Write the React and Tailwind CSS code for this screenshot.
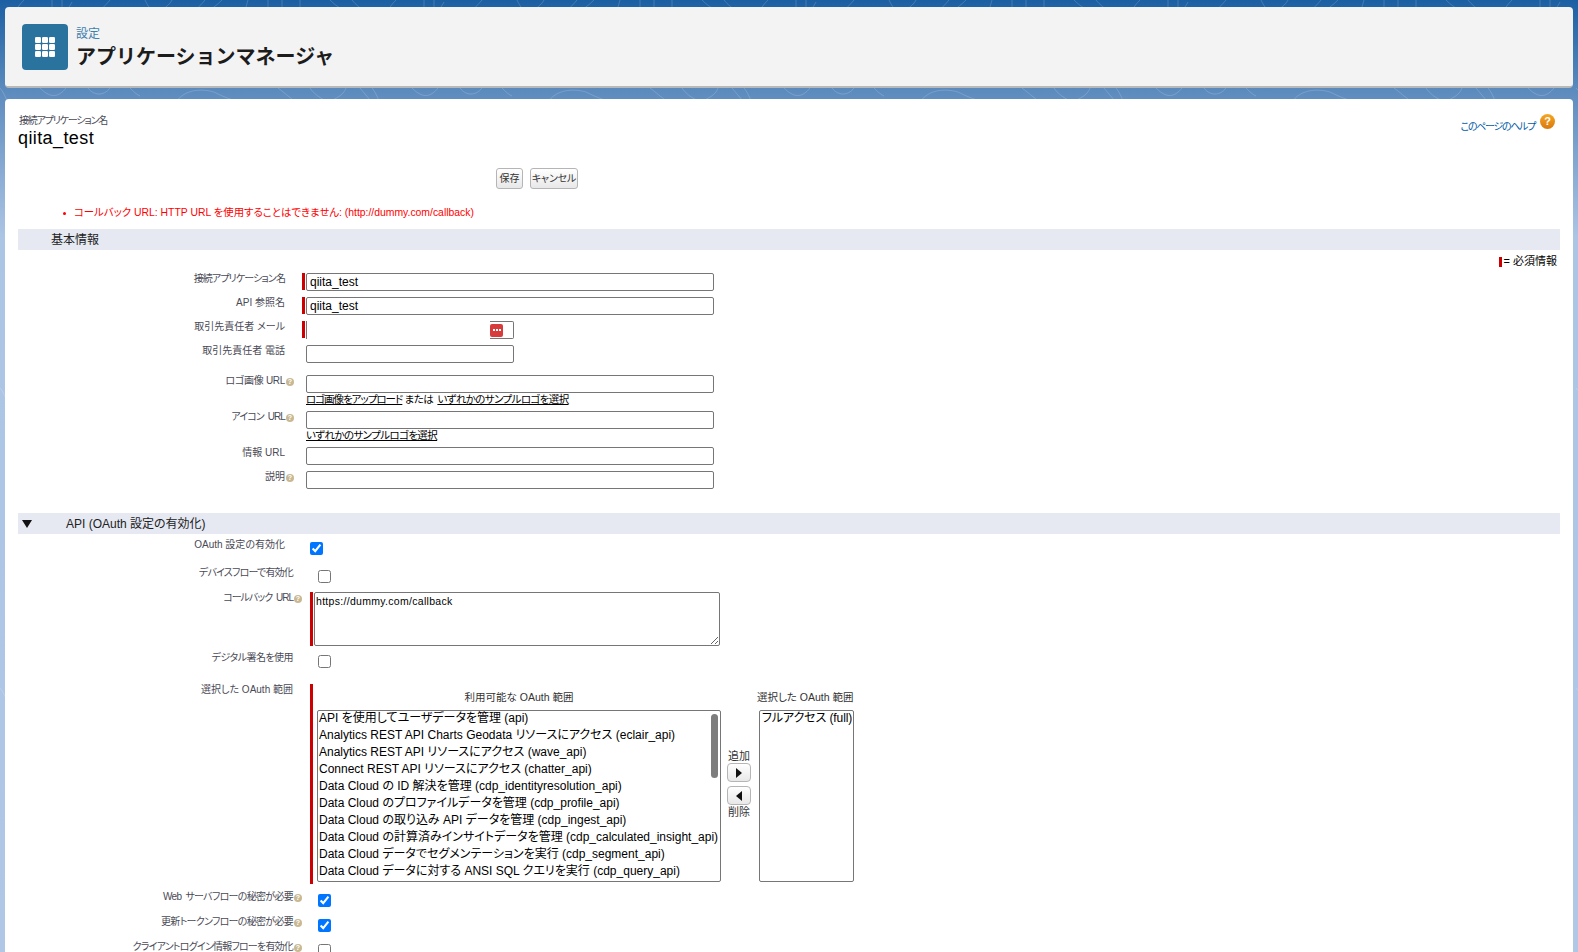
import React from "react";

const scopes = [
  "API を使用してユーザデータを管理 (api)",
  "Analytics REST API Charts Geodata リソースにアクセス (eclair_api)",
  "Analytics REST API リソースにアクセス (wave_api)",
  "Connect REST API リソースにアクセス (chatter_api)",
  "Data Cloud の ID 解決を管理 (cdp_identityresolution_api)",
  "Data Cloud のプロファイルデータを管理 (cdp_profile_api)",
  "Data Cloud の取り込み API データを管理 (cdp_ingest_api)",
  "Data Cloud の計算済みインサイトデータを管理 (cdp_calculated_insight_api)",
  "Data Cloud データでセグメンテーションを実行 (cdp_segment_api)",
  "Data Cloud データに対する ANSI SQL クエリを実行 (cdp_query_api)",
];

const inputClass =
  "block h-[18px] border border-[#767676] rounded-[2px] bg-white px-[3px] text-[12px] leading-none text-black outline-none";

const labelClass = "shrink-0 text-right text-[10px] leading-[11px] text-[#4a4a56] whitespace-nowrap";

const Help = () => (
  <span className="inline-flex w-[8px] h-[8px] ml-[1px] rounded-full bg-[#c9b892] text-white text-[7px] leading-[8px] justify-center font-bold tracking-normal align-[0px]">
    ?
  </span>
);

const Bg = () => (
  <svg className="absolute inset-0 w-full h-full" aria-hidden="true">
    <defs>
      <pattern id="topo" width="372" height="300" patternUnits="userSpaceOnUse">
        <g fill="none" stroke="#ffffff" strokeOpacity="0.16" strokeWidth="1">
          <path d="M24 0 C18 6 16 10 14 16" />
          <path d="M110 0 C106 5 100 10 96 16" />
          <path d="M52 0 V12 M62 0 V10 M72 2 C70 6 68 8 66 12" />
          <path d="M145 0 C148 6 150 10 156 12 C164 10 170 4 172 0" />
          <path d="M205 0 C200 6 196 10 190 14 M222 0 C216 6 210 10 204 14" />
          <path d="M248 0 L244 14 M268 0 V12 M282 0 V12 M300 0 V12" />
          <path d="M330 0 C336 6 342 10 350 12 M352 0 C356 5 360 8 366 12" />
          <path d="M40 88 C50 98 58 98 66 88 M88 88 C94 96 104 96 110 88" />
          <path d="M130 88 C134 92 136 94 140 96 M176 102 C184 90 200 88 214 92 C226 98 232 100 240 102" />
          <path d="M278 88 C286 94 290 98 296 102 M310 88 C314 94 320 98 328 102 C338 98 344 94 346 88" />
          <path d="M0 88 C5 94 6 100 8 102 M360 88 L370 100" />
        </g>
      </pattern>
    </defs>
    <rect width="100%" height="100%" fill="url(#topo)" />
  </svg>
);

const Field = ({ label, help, req, tight = "", children, className = "" }) => (
  <div className={`flex items-start ${className}`}>
    <div className={`w-[276px] ${labelClass} ${tight}`}>
      {label}
      {help ? <Help /> : <span className="inline-block w-[9px]" />}
    </div>
    <div className={`ml-[8px] w-[3px] h-[17px] shrink-0 ${req ? "bg-[#c00]" : ""}`} />
    <div className="ml-[1px]">{children}</div>
  </div>
);

const Field2 = ({ label, help, tight = "", className = "", children }) => (
  <div className={`flex items-start ${className}`}>
    <div className={`w-[284px] ${labelClass} ${tight}`}>
      {label}
      {help ? <Help /> : <span className="inline-block w-[9px]" />}
    </div>
    {children}
  </div>
);

const Check = ({ checked, className = "" }) => (
  <input
    type="checkbox"
    defaultChecked={checked}
    className={`w-[13px] h-[13px] m-0 block shrink-0 ${className}`}
  />
);

const MoveButton = ({ children }) => (
  <button className="w-[24px] h-[19px] flex items-center justify-center rounded-[4px] border border-[#b5b5b5] bg-gradient-to-b from-white to-[#e8e8e8]">
    {children}
  </button>
);

const App = () => {
  return (
    <div className="relative h-[952px] w-full overflow-hidden bg-[linear-gradient(to_bottom,#1b5fa3_0%,#5f8dbf_10%,#adc5e5_25%,#b0c7e6_100%)] text-black [font-family:'Liberation_Sans','Noto_Sans_CJK_JP',sans-serif] [font-feature-settings:'palt']">
      <Bg />
      <div className="relative px-[5px] pt-[7px]">
        {/* page title */}
        <div className="h-[81px] rounded-[4px] bg-[#f3f3f3] border-b-2 border-[#b8b8b8] flex items-start pl-[17px] pt-[17px]">
          <div className="w-[46px] h-[46px] rounded-[4px] bg-[#2a739f] flex items-center justify-center">
            <svg width="20" height="20" viewBox="0 0 20 20" fill="#fff">
              {[0, 7, 14].map((y) =>
                [0, 7, 14].map((x) => (
                  <rect key={`${x}-${y}`} x={x} y={y} width="6" height="6" rx="1.2" />
                ))
              )}
            </svg>
          </div>
          <div className="ml-[8px] pt-[1px]">
            <div className="text-[12px] leading-[18px] text-[#3f7fae]">設定</div>
            <h1 className="mt-[1px] text-[20px] leading-[26px] font-bold text-[#1c1c1c] [font-feature-settings:normal]">
              アプリケーションマネージャ
            </h1>
          </div>
        </div>

        {/* detail card */}
        <div className="mt-[11px] h-[900px] rounded-t-[4px] bg-white px-[13px] pt-[15px]">
          <div className="flex justify-between items-start">
            <div>
              <div className="pl-[1px] text-[10px] leading-[14px] text-[#4a4a56] tracking-[-1.2px]">接続アプリケーション名</div>
              <div className="text-[18px] leading-[20px] text-black tracking-[0.4px]">qiita_test</div>
            </div>
            <div className="flex items-start pr-[5px]">
              <a className="mt-[7px] text-[10px] leading-[12px] text-[#015ba7] tracking-[-1.3px]">このページのヘルプ</a>
              <span className="ml-[5px] w-[15px] h-[15px] rounded-full flex items-center justify-center text-white text-[11px] leading-none font-bold bg-gradient-to-b from-[#f5a623] to-[#d9780f]">
                ?
              </span>
            </div>
          </div>

          <div className="mt-[20px] ml-[478px] flex gap-[7px]">
            <button className="h-[21px] w-[27px] rounded-[3px] border border-[#b5b5b5] bg-gradient-to-b from-white to-[#e8e8e8] text-[10px] text-[#333]">
              保存
            </button>
            <button className="h-[21px] w-[48px] rounded-[3px] border border-[#b5b5b5] bg-gradient-to-b from-white to-[#e8e8e8] text-[10px] text-[#333] tracking-[-0.2px]">
              キャンセル
            </button>
          </div>

          <div className="mt-[17px] ml-[45px] flex items-center text-[10.4px] leading-[14px] text-[#f00]">
            <span className="w-[3px] h-[3px] rounded-full bg-[#f00] mr-[8px]" />
            コールバック URL: HTTP URL を使用することはできません: (http://dummy.com/callback)
          </div>

          <div className="mt-[9px] h-[21px] bg-[#e6e9f2] pl-[33px] text-[12px] leading-[22px] text-[#222]">
            基本情報
          </div>

          <div className="h-[23px] flex justify-end items-center pr-[3px] text-[11px] text-black">
            <span className="w-[3px] h-[10px] bg-[#c00] mr-[2px]" />= 必須情報
          </div>

          {/* basic info */}
          <Field label="接続アプリケーション名" req tight="tracking-[-0.9px]">
            <input readOnly value="qiita_test" className={`${inputClass} w-[408px]`} />
          </Field>
          <Field label="API 参照名" req className="mt-[6px]">
            <input readOnly value="qiita_test" className={`${inputClass} w-[408px]`} />
          </Field>
          <Field label="取引先責任者 メール" req className="mt-[6px]">
            <div className="flex h-[18px] w-[208px] border-l border-[#767676]">
              <div className="w-[183px]" />
              <div className="flex-1 flex items-center border-y border-r border-[#767676] rounded-r-[2px]">
                <span className="w-[13px] h-[13px] rounded-[2px] bg-[#d83b3b] flex items-center justify-center gap-[1px]">
                  <i className="w-[2px] h-[2px] bg-white" />
                  <i className="w-[2px] h-[2px] bg-white" />
                  <i className="w-[2px] h-[2px] bg-white" />
                </span>
              </div>
            </div>
          </Field>
          <Field label="取引先責任者 電話" className="mt-[6px]">
            <input readOnly className={`${inputClass} w-[208px]`} />
          </Field>
          <Field label="ロゴ画像 URL" help tight="tracking-[-0.3px]" className="mt-[12px]">
            <input readOnly className={`${inputClass} w-[408px]`} />
            <div className="h-[18px] text-[10.5px] leading-[12px] tracking-[-0.6px]">
              <span className="underline tracking-[-1px]">ロゴ画像をアップロード</span> または{" "}
              <span className="underline ml-[2px]">いずれかのサンプルロゴを選択</span>
            </div>
          </Field>
          <Field label="アイコン URL" help tight="tracking-[-0.9px] [word-spacing:2px]">
            <input readOnly className={`${inputClass} w-[408px]`} />
            <div className="h-[18px] text-[10.5px] leading-[12px] tracking-[-0.6px]">
              <span className="underline">いずれかのサンプルロゴを選択</span>
            </div>
          </Field>
          <Field label="情報 URL">
            <input readOnly className={`${inputClass} w-[408px]`} />
          </Field>
          <Field label="説明" help className="mt-[6px]">
            <input readOnly className={`${inputClass} w-[408px]`} />
          </Field>

          {/* oauth */}
          <div className="mt-[24px] h-[21px] bg-[#e6e9f2] flex items-center text-[12px] text-[#222]">
            <svg className="ml-[4px]" width="10" height="8" viewBox="0 0 10 8" fill="#111">
              <path d="M0 0 H10 L5 8 Z" />
            </svg>
            <span className="ml-[34px]">API (OAuth 設定の有効化)</span>
          </div>

          <div className="flex items-start mt-[5px]">
            <div className={`w-[276px] ${labelClass}`}>
              OAuth 設定の有効化<span className="inline-block w-[9px]" />
            </div>
            <Check checked className="ml-[16px] mt-[3px]" />
          </div>
          <Field2 label="デバイスフローで有効化" tight="tracking-[-0.8px]" className="mt-[12px]">
            <Check className="ml-[16px] mt-[3px]" />
          </Field2>
          <Field2 label="コールバック URL" help tight="tracking-[-1px] [word-spacing:2px]" className="mt-[9px]">
            <div className="ml-[8px] w-[3px] h-[54px] bg-[#c00]" />
            <textarea
              readOnly
              value="https://dummy.com/callback"
              className="ml-[1px] w-[406px] h-[54px] block border border-[#767676] rounded-[2px] px-[1px] py-[2px] text-[10.5px] leading-[13px] tracking-[0.3px] text-black outline-none"
            />
          </Field2>
          <Field2 label="デジタル署名を使用" tight="tracking-[-0.55px]" className="mt-[6px]">
            <Check className="ml-[16px] mt-[3px]" />
          </Field2>

          <Field2 label="選択した OAuth 範囲" className="mt-[16px]">
            <div className="ml-[8px] w-[3px] h-[200px] bg-[#c00]" />
            <div className="ml-[4px] flex items-start">
              <div className="w-[404px]">
                <div className="h-[26px] text-center text-[10.5px] leading-[27px] text-[#333]">
                  利用可能な OAuth 範囲
                </div>
                <div className="relative h-[172px] overflow-hidden border border-[#767676] rounded-[2px] pl-[1px] text-[12px] leading-[17px] text-black">
                  <div className="-mt-[1px]">
                    {scopes.map((s) => (
                      <div key={s} className="whitespace-nowrap">
                        {s}
                      </div>
                    ))}
                  </div>
                  <div className="absolute right-[2px] top-[3px] w-[7px] h-[64px] rounded-full bg-[#7d7d7d]" />
                </div>
              </div>
              <div className="w-[38px] pr-[2px] pt-[65px] flex flex-col items-center text-[11px] leading-[14px] text-[#333]">
                追加
                <MoveButton>
                  <svg width="6" height="10" viewBox="0 0 6 10" fill="#111">
                    <path d="M0 0 L6 5 L0 10 Z" />
                  </svg>
                </MoveButton>
                <div className="mt-[4px]">
                  <MoveButton>
                    <svg width="6" height="10" viewBox="0 0 6 10" fill="#111">
                      <path d="M6 0 L0 5 L6 10 Z" />
                    </svg>
                  </MoveButton>
                </div>
                削除
              </div>
              <div className="w-[95px]">
                <div className="h-[26px] whitespace-nowrap text-[10.5px] leading-[27px] text-[#333] -ml-[2px]">
                  選択した OAuth 範囲
                </div>
                <div className="h-[172px] border border-[#767676] rounded-[2px] pl-[2px] text-[12px] leading-[15px] text-black whitespace-nowrap overflow-hidden tracking-[-0.1px]">
                  フルアクセス (full)
                </div>
              </div>
            </div>
          </Field2>

          <Field2 label="Web サーバフローの秘密が必要" help tight="tracking-[-0.7px] [word-spacing:2px]" className="mt-[7px]">
            <Check checked className="ml-[16px] mt-[3px]" />
          </Field2>
          <Field2 label="更新トークンフローの秘密が必要" help tight="tracking-[-0.7px]" className="mt-[9px]">
            <Check checked className="ml-[16px] mt-[3px]" />
          </Field2>
          <Field2 label="クライアントログイン情報フローを有効化" help tight="tracking-[-0.8px]" className="mt-[9px]">
            <Check className="ml-[16px] mt-[3px]" />
          </Field2>
        </div>
      </div>
    </div>
  );
};

export default App;
